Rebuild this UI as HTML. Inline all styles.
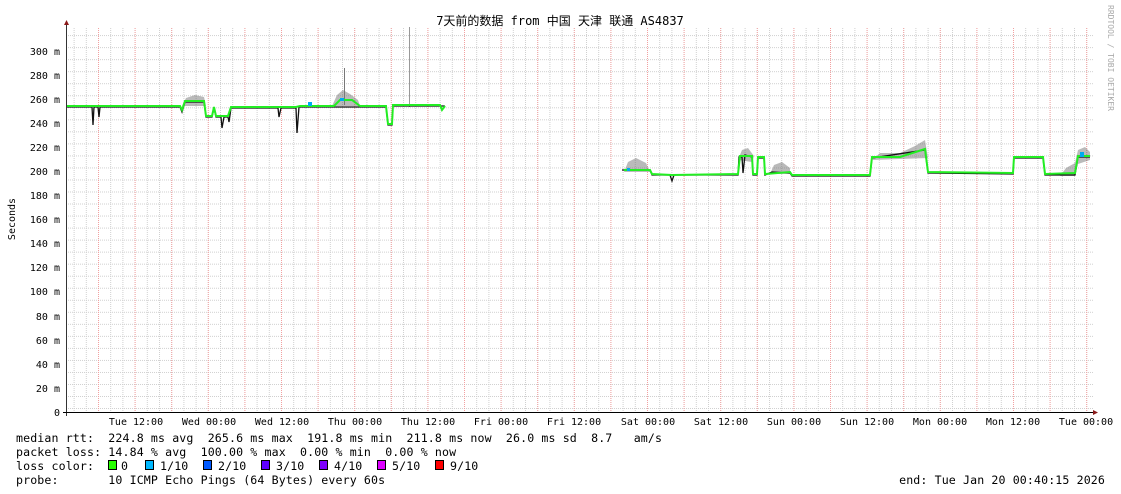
<!DOCTYPE html>
<html><head><meta charset="utf-8"><style>
html,body{margin:0;padding:0;background:#fff;width:1121px;height:494px;overflow:hidden;position:relative}
svg{display:block}
.lg{position:absolute;left:16px;font-family:"DejaVu Sans Mono","Liberation Mono",monospace;font-size:11.6px;letter-spacing:0.12px;line-height:14px;white-space:pre;color:#000}
.a{font-family:"DejaVu Sans Mono","Liberation Mono",monospace;font-size:10px;fill:#000}
</style></head><body>
<svg width="1121" height="494" viewBox="0 0 1121 494" xmlns="http://www.w3.org/2000/svg">
<defs>
<pattern id="vg" x="73.6" y="0" width="12.2" height="494" patternUnits="userSpaceOnUse">
<line x1="0.5" y1="0" x2="0.5" y2="494" stroke="#cfcfcf" stroke-width="1" stroke-dasharray="1,1"/>
</pattern>
<pattern id="hg" x="0" y="-0.97" width="1121" height="12.03" patternUnits="userSpaceOnUse">
<line x1="0" y1="0.5" x2="1121" y2="0.5" stroke="#cfcfcf" stroke-width="1" stroke-dasharray="1,1"/>
</pattern>
<pattern id="rg" x="98" y="0" width="36.6" height="494" patternUnits="userSpaceOnUse">
<line x1="0.5" y1="0" x2="0.5" y2="494" stroke="#f2a0a0" stroke-width="1" stroke-dasharray="1,1"/>
</pattern>
</defs>
<rect x="0" y="0" width="1121" height="494" fill="#fff"/>
<rect x="67" y="27" width="1026" height="385" fill="url(#hg)"/>
<rect x="68" y="27" width="1025" height="385" fill="url(#vg)"/>
<rect x="68" y="27" width="1025" height="385" fill="url(#rg)"/>
<g fill="#666" opacity="0.45">
<polygon points="182,106 186,98 195,95 204,97 206,106"/>
<polygon points="332,106 337,95 343,90 350,94 358,100 360,106"/>
<polygon points="624,172 628,162 636,158 646,163 650,172"/>
<polygon points="738,160 742,150 748,148 754,156 752,162"/>
<polygon points="770,174 774,165 782,162 790,168 790,174"/>
<polygon points="872,160 880,153 900,153 915,146 925,140 928,158"/>
<polygon points="1060,176 1066,168 1075,163 1078,150 1085,147 1090,152 1090,160 1078,164 1075,176"/>
</g>
<line x1="409.5" y1="27" x2="409.5" y2="107" stroke="#999"/>
<line x1="344.5" y1="68" x2="344.5" y2="105" stroke="#777"/>
<g fill="none" stroke="#111" stroke-width="1.3">
<polyline points="67,107 92,107 93,125 94,107 98,107 99,117 100,107 180,107 182,112 185,102 204,102 206,117 212,117 214,108 216,117 221,117 222,128 224,117 228,117 229,122 231,108 278,108 279,117 281,108 296,108 297,133 299,107 386,107 388,125 392,125 393,106 445,106"/>
<polyline points="622,170 650,170 652,175 670,175 672,181 674,175 738,175 739,157 742,157 743,173 745,155 752,157 753,175 757,175 758,158 764,158 765,175 772,172 790,173 792,176 870,176 872,158 925,150 928,173 1013,174 1014,158 1043,158 1045,175 1075,175 1078,157 1090,157"/>
</g>
<g fill="none" stroke="#22ee22" stroke-width="2">
<polyline points="67,106 180,106 182,110 185,101 204,101 206,116 212,116 214,107 216,116 228,116 231,107 278,107 296,107 300,106 334,106 340,100 352,100 360,106 386,106 388,124 392,124 393,105 440,105 442,110 445,106"/>
<polyline points="624,170 650,170 652,174 672,175 738,174 740,156 752,156 753,174 757,174 758,157 764,157 765,174 790,172 792,175 870,175 872,157 900,157 925,149 928,172 1013,173 1014,157 1043,157 1045,174 1075,173 1078,156 1090,156"/>
</g>
<g fill="#00aaee">
<rect x="308" y="102" width="4" height="4"/><rect x="340" y="98" width="4" height="3"/>
<rect x="627" y="168" width="3" height="3"/><rect x="1080" y="152" width="4" height="5"/>
</g>
<line x1="66.5" y1="24" x2="66.5" y2="416" stroke="#333"/>
<line x1="63" y1="412.5" x2="1093" y2="412.5" stroke="#000"/>
<polygon points="64,25 69,25 66.5,20" fill="#8b1a1a"/>
<polygon points="1093,410 1093,415 1098,412.5" fill="#8b1a1a"/>
<g class="a" text-anchor="end" font-size="10.5">
<text x="60" y="416">0</text>
<text x="60" y="392">20 m</text><text x="60" y="368">40 m</text><text x="60" y="344">60 m</text>
<text x="60" y="320">80 m</text><text x="60" y="295">100 m</text><text x="60" y="271">120 m</text>
<text x="60" y="247">140 m</text><text x="60" y="223">160 m</text><text x="60" y="199">180 m</text>
<text x="60" y="175">200 m</text><text x="60" y="151">220 m</text><text x="60" y="127">240 m</text>
<text x="60" y="103">260 m</text><text x="60" y="79">280 m</text><text x="60" y="55">300 m</text>
</g>
<text class="a" font-size="11" transform="translate(15,219) rotate(-90)" text-anchor="middle">Seconds</text>
<g class="a" text-anchor="middle" font-size="10">
<text x="136" y="425">Tue 12:00</text><text x="209" y="425">Wed 00:00</text><text x="282" y="425">Wed 12:00</text>
<text x="355" y="425">Thu 00:00</text><text x="428" y="425">Thu 12:00</text><text x="501" y="425">Fri 00:00</text>
<text x="574" y="425">Fri 12:00</text><text x="648" y="425">Sat 00:00</text><text x="721" y="425">Sat 12:00</text>
<text x="794" y="425">Sun 00:00</text><text x="867" y="425">Sun 12:00</text><text x="940" y="425">Mon 00:00</text>
<text x="1013" y="425">Mon 12:00</text><text x="1086" y="425">Tue 00:00</text>
</g>
<text x="560" y="25" text-anchor="middle" style="font-family:'DejaVu Sans Mono','Noto Sans CJK SC',monospace;font-size:12px">7天前的数据 from 中国 天津 联通 AS4837</text>
<text transform="translate(1108,5) rotate(90)" style="font-family:'DejaVu Sans Mono',monospace;font-size:8px;fill:#aaa">RRDTOOL / TOBI OETIKER</text>
<g stroke="#000" stroke-width="1">
<rect x="108.5" y="460.5" width="8" height="9" fill="#26ff00"/>
<rect x="145.5" y="460.5" width="8" height="9" fill="#00b8ff"/>
<rect x="203.5" y="460.5" width="8" height="9" fill="#0059ff"/>
<rect x="261.5" y="460.5" width="8" height="9" fill="#5e00ff"/>
<rect x="319.5" y="460.5" width="8" height="9" fill="#7e00ff"/>
<rect x="377.5" y="460.5" width="8" height="9" fill="#dd00ff"/>
<rect x="435.5" y="460.5" width="8" height="9" fill="#ff0000"/>
</g>
</svg>
<div class="lg" style="top:431px">median rtt:  224.8 ms avg  265.6 ms max  191.8 ms min  211.8 ms now  26.0 ms sd  8.7   am/s
packet loss: 14.84 % avg  100.00 % max  0.00 % min  0.00 % now
loss color:
probe:       10 ICMP Echo Pings (64 Bytes) every 60s</div>
<div class="lg" style="top:459px;left:121px">0</div>
<div class="lg" style="top:459px;left:160px">1/10</div>
<div class="lg" style="top:459px;left:218px">2/10</div>
<div class="lg" style="top:459px;left:276px">3/10</div>
<div class="lg" style="top:459px;left:334px">4/10</div>
<div class="lg" style="top:459px;left:392px">5/10</div>
<div class="lg" style="top:459px;left:450px">9/10</div>
<div class="lg" style="top:473px;left:auto;right:16px">end: Tue Jan 20 00:40:15 2026</div>
</body></html>
